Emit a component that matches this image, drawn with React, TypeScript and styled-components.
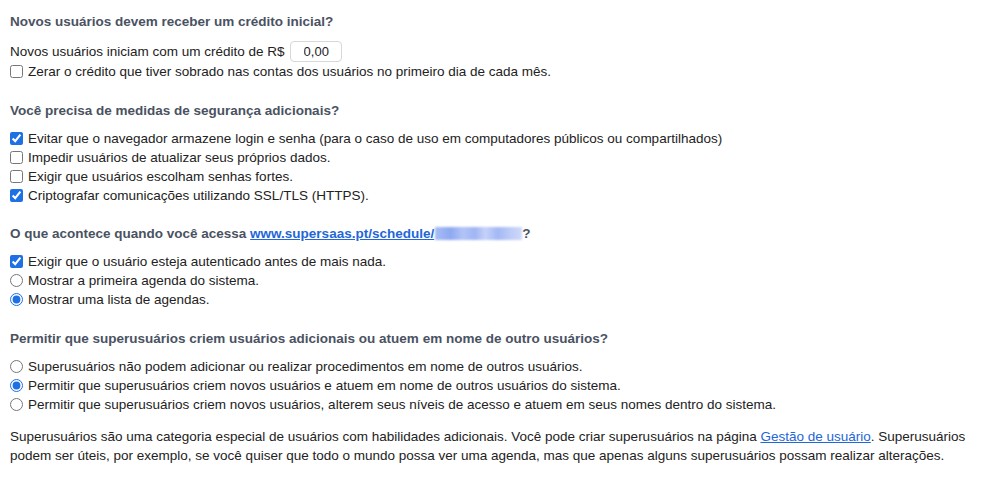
import React from "react";
import styled, { createGlobalStyle } from "styled-components";

const GlobalStyle = createGlobalStyle`
  html, body { margin: 0; padding: 0; background: #ffffff; }
  body {
    font-family: "Liberation Sans", Arial, sans-serif;
    font-size: 13.5px;
    color: #222222;
  }
`;

const Page = styled.div`
  padding: 12px 10px 0 10px;
  width: 984px;
  box-sizing: border-box;
`;

const Section = styled.section<{ $gap?: number }>`
  margin-bottom: ${(p) => (p.$gap ?? 21)}px;
`;

const Heading = styled.h3<{ $gap?: number }>`
  margin: 0 0 ${(p) => (p.$gap ?? 9)}px 0;
  font-size: 13.5px;
  line-height: 19px;
  font-weight: 700;
  color: #4a5262;
`;

const Row = styled.div`
  display: flex;
  align-items: center;
  line-height: 19px;
  min-height: 22px;
`;

const Option = styled.label`
  display: flex;
  align-items: center;
  line-height: 19px;
  height: 19px;
  cursor: pointer;
  white-space: nowrap;
`;

const Check = styled.input`
  width: 13px;
  height: 13px;
  margin: 0 5px 0 0;
  accent-color: #1f6fe5;
  flex: none;
`;

const AmountInput = styled.input`
  width: 52px;
  height: 21px;
  box-sizing: border-box;
  margin-left: 5px;
  border: 1px solid #d6d8dc;
  border-radius: 4px;
  font-family: inherit;
  font-size: 13px;
  color: #222;
  padding: 0 6px 0 13px;
  outline: none;
`;

const Link = styled.a`
  color: #2366d8;
  text-decoration: underline;
`;

const Redacted = styled.span`
  display: inline-block;
  width: 87px;
  height: 13px;
  margin-left: 1px;
  vertical-align: -2px;
  background: linear-gradient(
    90deg,
    #a9bdf5 0%,
    #8ea9f2 18%,
    #b3c4f6 32%,
    #9fb5f4 46%,
    #c6d2f8 58%,
    #a3b8f4 72%,
    #bccbf7 86%,
    #cfd9f9 100%
  );
  filter: blur(0.8px);
`;

const Paragraph = styled.p`
  margin: 13px 0 0 0;
  line-height: 19px;
  color: #222222;
`;

const Line = styled.span`
  display: block;
  white-space: nowrap;
`;

type Item = { label: string; checked: boolean };

const security: Item[] = [
  { label: "Evitar que o navegador armazene login e senha (para o caso de uso em computadores públicos ou compartilhados)", checked: true },
  { label: "Impedir usuários de atualizar seus próprios dados.", checked: false },
  { label: "Exigir que usuários escolham senhas fortes.", checked: false },
  { label: "Criptografar comunicações utilizando SSL/TLS (HTTPS).", checked: true },
];

const superOpts: Item[] = [
  { label: "Superusuários não podem adicionar ou realizar procedimentos em nome de outros usuários.", checked: false },
  { label: "Permitir que superusuários criem novos usuários e atuem em nome de outros usuários do sistema.", checked: true },
  { label: "Permitir que superusuários criem novos usuários, alterem seus níveis de acesso e atuem em seus nomes dentro do sistema.", checked: false },
];

export default function App() {
  return (
    <>
      <GlobalStyle />
      <Page>
        <Section $gap={20}>
          <Heading>Novos usuários devem receber um crédito inicial?</Heading>
          <Row>
            Novos usuários iniciam com um crédito de R$
            <AmountInput defaultValue="0,00" />
          </Row>
          <Option>
            <Check type="checkbox" />
            Zerar o crédito que tiver sobrado nas contas dos usuários no primeiro dia de cada mês.
          </Option>
        </Section>

        <Section $gap={19}>
          <Heading $gap={9}>Você precisa de medidas de segurança adicionais?</Heading>
          {security.map((it) => (
            <Option key={it.label}>
              <Check type="checkbox" defaultChecked={it.checked} />
              {it.label}
            </Option>
          ))}
        </Section>

        <Section $gap={20}>
          <Heading $gap={9}>
            O que acontece quando você acessa{" "}
            <Link href="#">
              www.supersaas.pt/schedule/<Redacted />
            </Link>
            ?
          </Heading>
          <Option>
            <Check type="checkbox" defaultChecked />
            Exigir que o usuário esteja autenticado antes de mais nada.
          </Option>
          <Option>
            <Check type="radio" name="start" />
            Mostrar a primeira agenda do sistema.
          </Option>
          <Option>
            <Check type="radio" name="start" defaultChecked />
            Mostrar uma lista de agendas.
          </Option>
        </Section>

        <Section $gap={0}>
          <Heading>Permitir que superusuários criem usuários adicionais ou atuem em nome de outro usuários?</Heading>
          {superOpts.map((it) => (
            <Option key={it.label}>
              <Check type="radio" name="super" defaultChecked={it.checked} />
              {it.label}
            </Option>
          ))}
        </Section>

        <Paragraph>
          <Line>
            Superusuários são uma categoria especial de usuários com habilidades adicionais. Você pode criar
            superusuários na página <Link href="#">Gestão de usuário</Link>. Superusuários
          </Line>
          <Line>
            podem ser úteis, por exemplo, se você quiser que todo o mundo possa ver uma agenda, mas que apenas
            alguns superusuários possam realizar alterações.
          </Line>
        </Paragraph>
      </Page>
    </>
  );
}
